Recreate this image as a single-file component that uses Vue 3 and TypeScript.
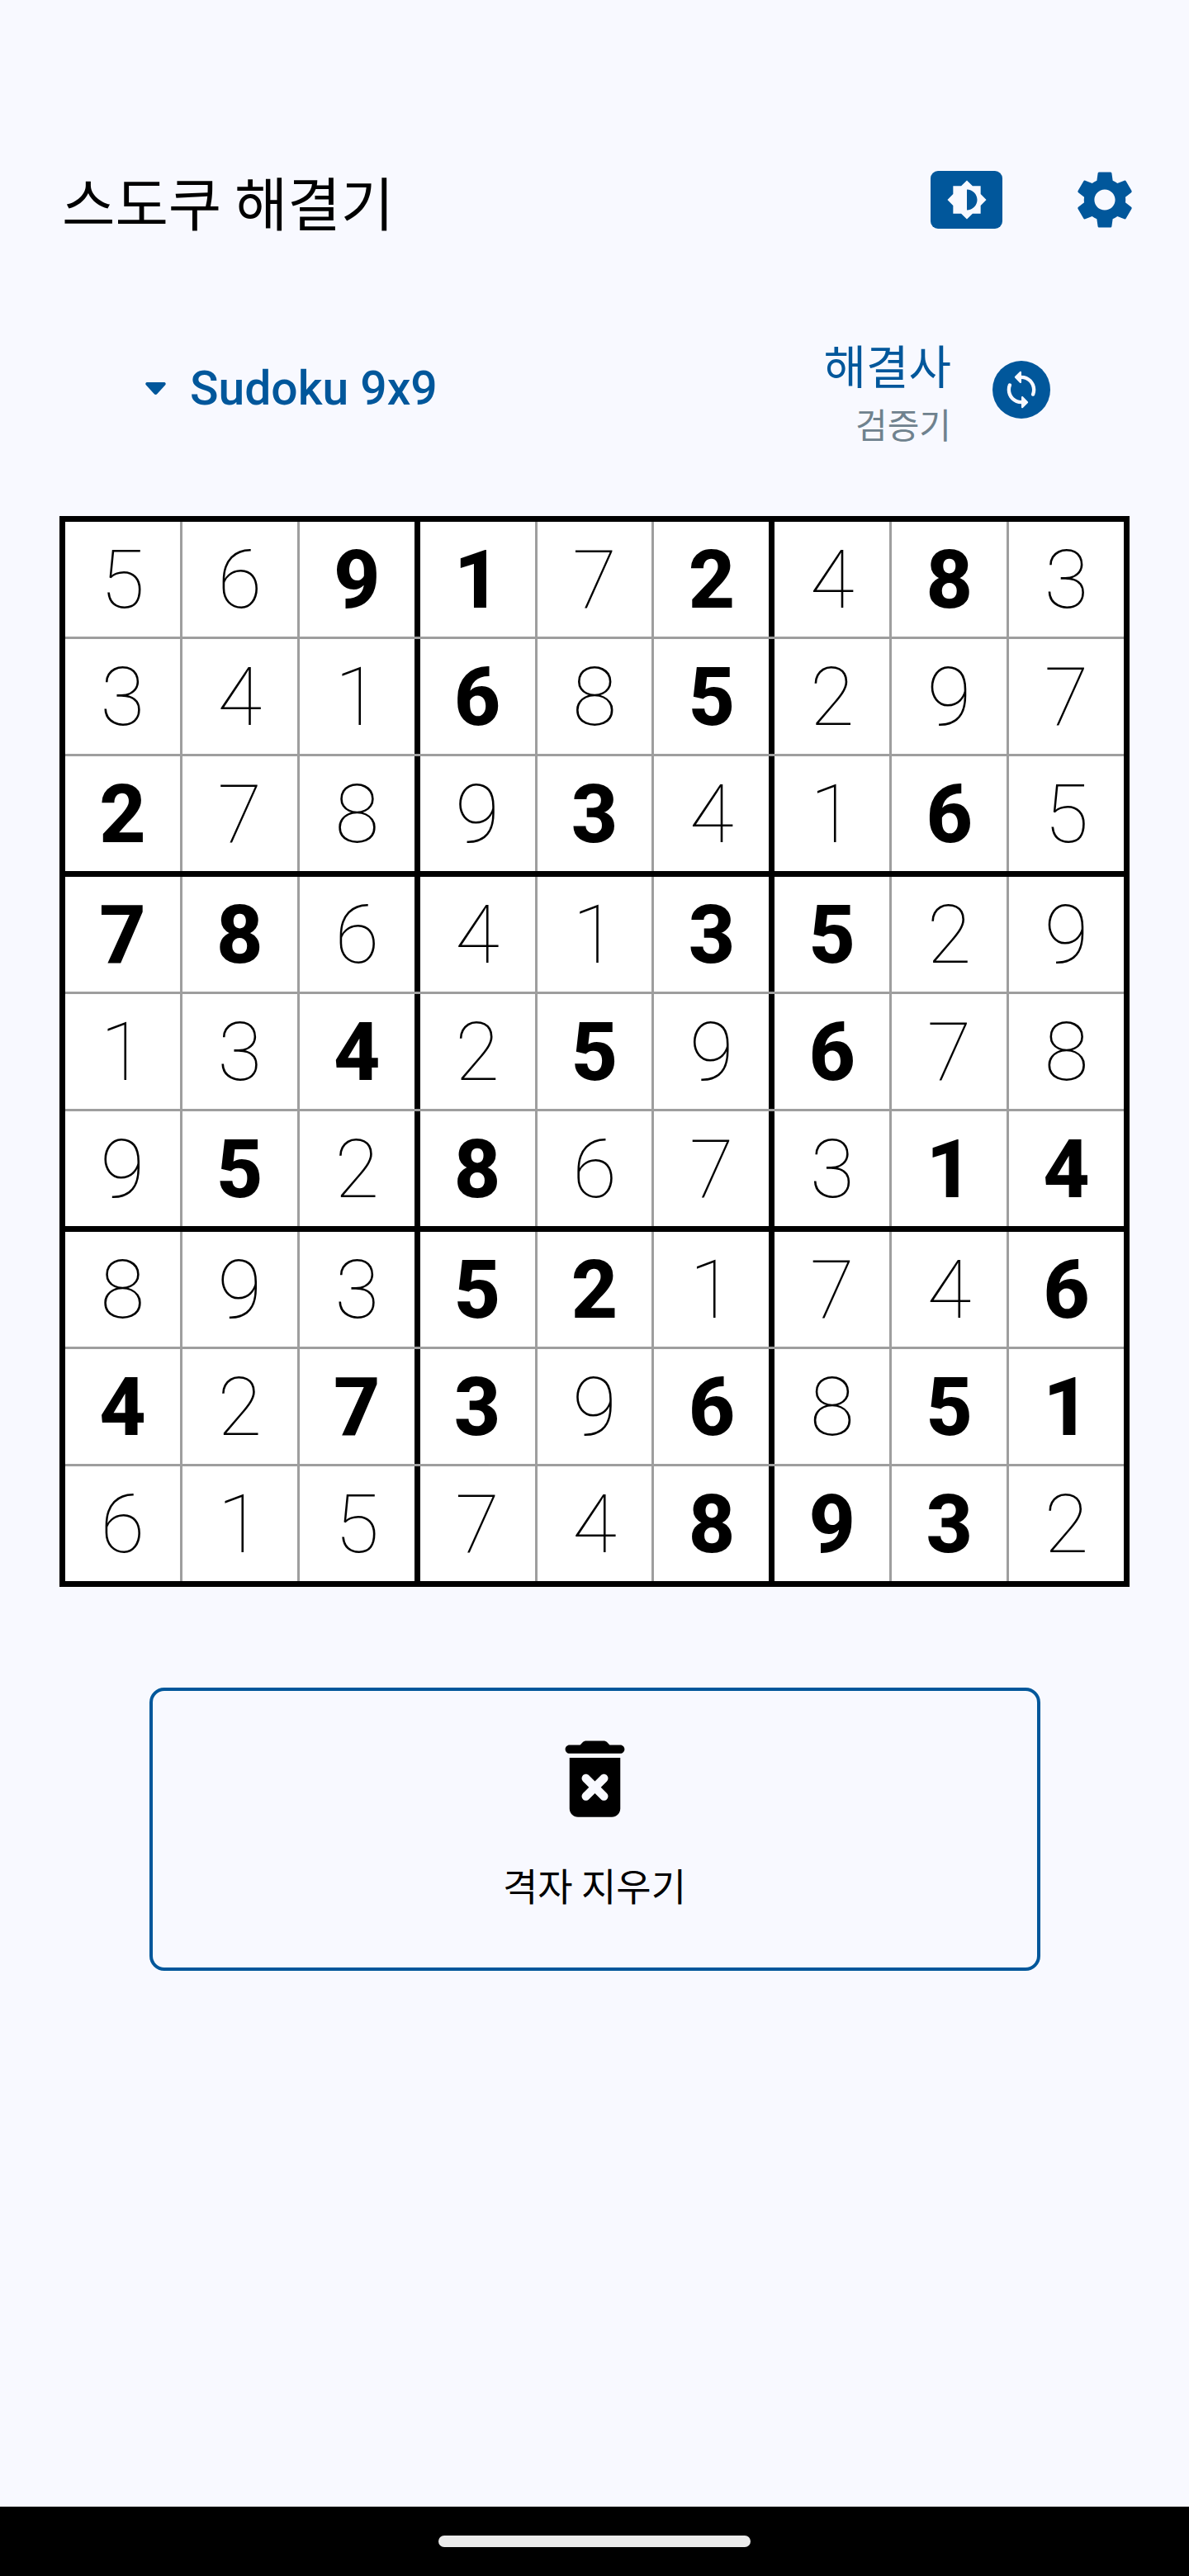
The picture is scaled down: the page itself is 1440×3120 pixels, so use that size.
<script setup lang="ts">
interface Cell {
  value: string
  given: boolean
}

const source: string[] = [
  '5 6 *9 *1 7 *2 4 *8 3',
  '3 4 1 *6 8 *5 2 9 7',
  '*2 7 8 9 *3 4 1 *6 5',
  '*7 *8 6 4 1 *3 *5 2 9',
  '1 3 *4 2 *5 9 *6 7 8',
  '9 *5 2 *8 6 7 3 *1 *4',
  '8 9 3 *5 *2 1 7 4 *6',
  '*4 2 *7 *3 9 *6 8 *5 *1',
  '6 1 5 7 4 *8 *9 *3 2'
]

const rows: Cell[][] = source.map((line) =>
  line.split(' ').map((token) => ({
    value: token.replace('*', ''),
    given: token.startsWith('*')
  }))
)
</script>

<template>
  <div class="page">
    <main class="content">
      <header class="header">
        <h1 class="title">스도쿠 해결기</h1>
        <div class="header-actions">
          <button class="theme-button" type="button" aria-label="테마">
            <svg viewBox="0 0 24 24" class="theme-icon">
              <path d="M20 15.31L23.31 12 20 8.69V4h-4.69L12 .69 8.69 4H4v4.69L.69 12 4 15.31V20h4.69L12 23.31 15.31 20H20v-4.69zM12 18V6c3.31 0 6 2.69 6 6s-2.69 6-6 6z" />
            </svg>
          </button>
          <svg viewBox="0 0 24 24" class="gear-icon">
            <path d="M19.14 12.94c.04-.3.06-.61.06-.94 0-.32-.02-.64-.07-.94l2.03-1.58c.18-.14.23-.41.12-.61l-1.92-3.32c-.12-.22-.37-.29-.59-.22l-2.39.96c-.5-.38-1.03-.7-1.62-.94l-.36-2.54c-.04-.24-.24-.41-.48-.41h-3.84c-.24 0-.43.17-.47.41l-.36 2.54c-.59.24-1.13.57-1.62.94l-2.39-.96c-.22-.08-.47 0-.59.22L2.74 8.87c-.12.21-.08.47.12.61l2.03 1.58c-.05.3-.09.63-.09.94s.02.64.07.94l-2.03 1.58c-.18.14-.23.41-.12.61l1.92 3.32c.12.22.37.29.59.22l2.39-.96c.5.38 1.03.7 1.62.94l.36 2.54c.05.24.24.41.48.41h3.84c.24 0 .44-.17.47-.41l.36-2.54c.59-.24 1.13-.56 1.62-.94l2.39.96c.22.08.47 0 .59-.22l1.92-3.32c.12-.22.07-.47-.12-.61l-2.01-1.58zM12 15.6c-1.98 0-3.6-1.62-3.6-3.6s1.62-3.6 3.6-3.6 3.6 1.62 3.6 3.6-1.62 3.6-3.6 3.6z" />
          </svg>
        </div>
      </header>

      <section class="mode-row">
        <div class="variant">
          <svg viewBox="0 0 28 18" class="caret">
            <path d="M3 1h22c1.8 0 2.6 2.1 1.4 3.4L16 16c-1.1 1.3-2.9 1.3-4 0L1.6 4.4C.4 3.1 1.2 1 3 1z" />
          </svg>
          <span class="variant-label">Sudoku 9x9</span>
        </div>
        <div class="solver">
          <div class="solver-text">
            <span class="solver-main">해결사</span>
            <span class="solver-sub">검증기</span>
          </div>
          <span class="sync-button">
            <svg viewBox="0 0 24 24" class="sync-icon">
              <path d="M12 4V2.21c0-.45-.54-.67-.85-.35l-2.8 2.79c-.2.2-.2.51 0 .71l2.79 2.79c.32.31.86.09.86-.36V6c3.31 0 6 2.69 6 6 0 .79-.15 1.56-.44 2.25-.15.36-.04.77.23 1.04.51.51 1.37.33 1.64-.34.37-.91.57-1.91.57-2.95 0-4.42-3.58-8-8-8zm0 14c-3.31 0-6-2.69-6-6 0-.79.15-1.56.44-2.25.15-.36.04-.77-.23-1.04-.51-.51-1.37-.33-1.64.34C4.2 9.96 4 10.96 4 12c0 4.42 3.58 8 8 8v1.79c0 .45.54.67.85.35l2.79-2.79c.2-.2.2-.51 0-.71l-2.79-2.79c-.31-.31-.85-.09-.85.36V18z" />
            </svg>
          </span>
        </div>
      </section>

      <section class="board">
        <div v-for="(row, r) in rows" :key="r" class="board-row" :class="{ 'row-thick': r === 2 || r === 5, 'row-last': r === 8 }">
          <div
            v-for="(cell, c) in row"
            :key="c"
            class="cell"
            :class="{ given: cell.given, 'col-thick': c === 2 || c === 5, 'col-last': c === 8 }"
          >{{ cell.value }}</div>
        </div>
      </section>

      <button class="clear-button" type="button">
        <svg viewBox="0 0 24 24" class="trash-icon">
          <path d="M6 19c0 1.1.9 2 2 2h8c1.1 0 2-.9 2-2V7H6v12zm3.17-7.83c.39-.39 1.02-.39 1.41 0L12 12.59l1.42-1.42c.39-.39 1.02-.39 1.41 0 .39.39.39 1.02 0 1.41L13.41 14l1.42 1.42c.39.39.39 1.02 0 1.41-.39.39-1.02.39-1.41 0L12 15.41l-1.42 1.42c-.39.39-1.02.39-1.41 0-.39-.39-.39-1.02 0-1.41L10.59 14l-1.42-1.42c-.39-.38-.39-1.02 0-1.41zM15.5 4l-.71-.71c-.18-.18-.44-.29-.7-.29H9.91c-.26 0-.52.11-.7.29L8.5 4H6c-.55 0-1 .45-1 1s.45 1 1 1h12c.55 0 1-.45 1-1s-.45-1-1-1h-2.5z" />
        </svg>
        <span class="clear-label">격자 지우기</span>
      </button>
    </main>

    <footer class="nav-bar">
      <span class="nav-handle"></span>
    </footer>
  </div>
</template>

<style scoped>
.page {
  width: 1440px;
  min-height: 3120px;
  display: flex;
  flex-direction: column;
  background: #f8f9ff;
  font-family: "Noto Sans CJK KR", "Roboto", sans-serif;
  color: #000;
}

.content {
  flex: 1;
  display: flex;
  flex-direction: column;
  align-items: center;
}

.header {
  width: 100%;
  box-sizing: border-box;
  height: 84px;
  margin-top: 200px;
  padding: 0 60px 0 75px;
  display: flex;
  align-items: center;
  justify-content: space-between;
}

.title {
  margin: 3px 0 0;
  font-size: 70px;
  line-height: 84px;
  font-weight: 400;
}

.header-actions {
  display: flex;
  align-items: center;
  gap: 82px;
}

.theme-button {
  width: 87px;
  height: 70px;
  padding: 0;
  border: 0;
  border-radius: 9px;
  background: #01579b;
  display: flex;
  align-items: center;
  justify-content: center;
}

.theme-icon {
  width: 50px;
  height: 50px;
  fill: #f8f9ff;
}

.gear-icon {
  width: 84px;
  height: 84px;
  fill: #01579b;
}

.mode-row {
  width: 100%;
  box-sizing: border-box;
  height: 117px;
  margin-top: 134px;
  padding: 0 168px 0 175px;
  display: flex;
  align-items: center;
  justify-content: space-between;
}

.variant {
  display: flex;
  align-items: center;
  gap: 28px;
  margin-top: -12px;
}

.caret {
  width: 27px;
  height: 17px;
  fill: #01579b;
}

.variant-label {
  font-family: "Roboto", sans-serif;
  font-size: 57px;
  line-height: 66px;
  font-weight: 500;
  color: #01579b;
}

.solver {
  display: flex;
  align-items: center;
  gap: 50px;
}

.solver-text {
  display: flex;
  flex-direction: column;
  align-items: flex-end;
  gap: 17px;
  margin-top: -8px;
}

.solver-main {
  font-size: 56px;
  line-height: 64px;
  color: #01579b;
}

.solver-sub {
  font-size: 42px;
  line-height: 46px;
  color: #6f828e;
}

.sync-button {
  width: 70px;
  height: 70px;
  margin-top: -10px;
  border-radius: 50%;
  background: #01579b;
  display: flex;
  align-items: center;
  justify-content: center;
}

.sync-icon {
  width: 52px;
  height: 52px;
  fill: #f8f9ff;
}

.board {
  width: 1296px;
  box-sizing: border-box;
  margin-top: 90px;
  border: 7px solid #000;
  background: #fff;
  display: flex;
  flex-direction: column;
}

.board-row {
  display: flex;
  border-bottom: 3px solid #9e9e9e;
}

.row-thick {
  border-bottom: 7px solid #000;
}

.row-last {
  border-bottom: 0;
}

.cell {
  flex: 1 1 0;
  height: 137px;
  padding-top: 2px;
  border-right: 3px solid #9e9e9e;
  display: flex;
  align-items: center;
  justify-content: center;
  font-family: "Roboto", sans-serif;
  font-size: 98px;
  line-height: 1;
  font-weight: 100;
}

.col-thick {
  border-right: 7px solid #000;
}

.col-last {
  border-right: 0;
}

.given {
  font-weight: 800;
}

.clear-button {
  width: 1079px;
  height: 343px;
  box-sizing: border-box;
  margin-top: 122px;
  padding: 0;
  border: 4px solid #01579b;
  border-radius: 18px;
  background: transparent;
  display: flex;
  flex-direction: column;
  align-items: center;
  color: #000;
  font-family: inherit;
}

.trash-icon {
  width: 123px;
  height: 123px;
  margin-top: 45px;
  fill: #000;
}

.clear-label {
  margin-top: 36px;
  font-size: 46px;
  line-height: 60px;
}

.nav-bar {
  height: 84px;
  background: #000;
  display: flex;
  align-items: flex-start;
  justify-content: center;
}

.nav-handle {
  width: 378px;
  height: 14px;
  margin-top: 35px;
  border-radius: 7px;
  background: #ebebeb;
}
</style>

<style>
body {
  margin: 0;
}
</style>
